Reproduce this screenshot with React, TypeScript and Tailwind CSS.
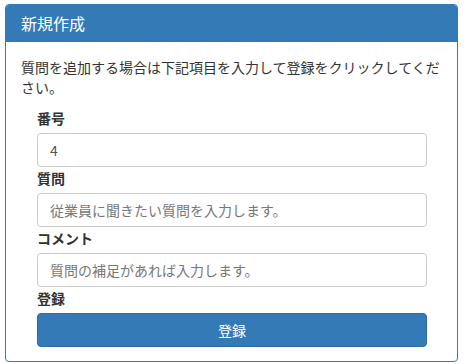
import React from 'react';

const font = { fontFamily: '"Noto Sans CJK JP", "Noto Sans", sans-serif' };

export default function App() {
  return (
    <div className="bg-white w-[465px] h-[364px] pt-1 pl-[5px]" style={font}>
      <div className="w-[453px] border border-[#337ab7] rounded-[4px] overflow-hidden">
        <div className="bg-[#337ab7] text-white text-[16px] leading-[17px] px-[15px] py-[10px] h-[37px]">
          新規作成
        </div>
        <div className="px-[15px] pt-[15px] pb-[14px] text-[14px] leading-[20px] text-[#333]">
          <p className="mb-[11px]">
            質問を追加する場合は下記項目を入力して登録をクリックしてください。
          </p>
          <form className="pl-4 pr-[15px]" onSubmit={(e) => e.preventDefault()}>
            <label className="block font-bold mb-[5px]">番号</label>
            <input
              defaultValue="4"
              className="block w-full h-[34px] px-3 border border-[#ccc] rounded-[4px] text-[#555] text-[14px] outline-none"
              style={font}
            />
            <label className="block font-bold mb-[5px] mt-[1px]">質問</label>
            <input
              placeholder="従業員に聞きたい質問を入力します。"
              className="block w-full h-[34px] px-3 border border-[#ccc] rounded-[4px] text-[#555] text-[14px] outline-none placeholder:text-[#777]"
              style={font}
            />
            <label className="block font-bold mb-[5px] mt-[1px]">コメント</label>
            <input
              placeholder="質問の補足があれば入力します。"
              className="block w-full h-[34px] px-3 border border-[#ccc] rounded-[4px] text-[#555] text-[14px] outline-none placeholder:text-[#777]"
              style={font}
            />
            <label className="block font-bold mb-[5px] mt-[1px]">登録</label>
            <button
              type="submit"
              className="block w-full h-[34px] bg-[#337ab7] border border-[#2e6da4] rounded-[4px] text-white text-[14px]"
              style={font}
            >
              登録
            </button>
          </form>
        </div>
      </div>
    </div>
  );
}
